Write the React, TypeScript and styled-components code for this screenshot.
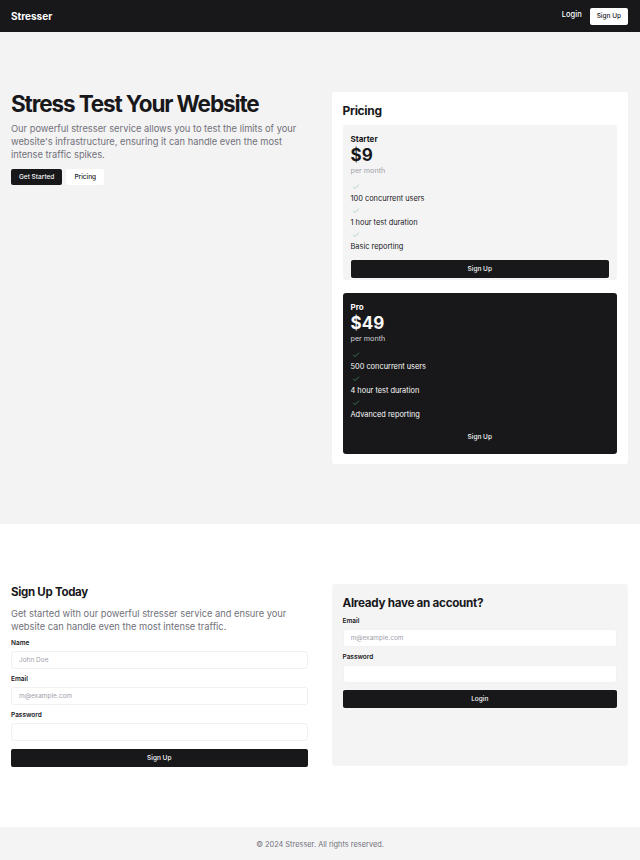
import styled, { createGlobalStyle } from 'styled-components';

const GlobalStyle = createGlobalStyle`
  html, body {
    margin: 0;
    padding: 0;
    background: #ffffff;
    font-family: Inter, 'Noto Sans', sans-serif;
    color: #18181b;
  }
  * {
    box-sizing: border-box;
  }
`;

const Header = styled.header`
  height: 32px;
  background: #18181b;
  display: flex;
  align-items: center;
  justify-content: space-between;
  padding: 0 12px 0 11px;
`;

const Brand = styled.div`
  color: #ffffff;
  font-size: 10px;
  font-weight: 700;
`;

const Nav = styled.nav`
  display: flex;
  align-items: center;
  gap: 8px;
`;

const NavLink = styled.a`
  color: #ffffff;
  font-size: 7.5px;
  font-weight: 500;
  margin-top: -4px;
`;

const Button = styled.button<{
  $variant?: 'dark' | 'light' | 'ghost';
  $block?: boolean;
  $h?: number;
  $mt?: number;
  $px?: number;
}>`
  border: none;
  font-family: inherit;
  font-size: 6.5px;
  font-weight: 500;
  border-radius: 2px;
  height: ${(p) => p.$h ?? 16}px;
  margin-top: ${(p) => p.$mt ?? 0}px;
  padding: 0 ${(p) => p.$px ?? 7}px;
  width: ${(p) => (p.$block ? '100%' : 'auto')};
  display: ${(p) => (p.$block ? 'flex' : 'inline-flex')};
  align-items: center;
  justify-content: center;
  background: ${(p) =>
    p.$variant === 'light' ? '#ffffff' : p.$variant === 'ghost' ? 'transparent' : '#18181b'};
  color: ${(p) => (p.$variant === 'light' ? '#18181b' : '#fafafa')};
`;

const Section = styled.section<{ $bg: string }>`
  background: ${(p) => p.$bg};
  padding: 60px 12px 60px 11px;
`;

const TwoCol = styled.div`
  display: grid;
  grid-template-columns: 1fr 1fr;
  gap: 24px;
  align-items: start;
`;

const HeroTitle = styled.h1`
  margin: 0;
  font-size: 22.5px;
  line-height: 24px;
  font-weight: 700;
  letter-spacing: -0.05em;
`;

const Lead = styled.p<{ $mt?: number }>`
  margin: ${(p) => p.$mt ?? 6}px 0 0;
  color: #71717a;
  font-size: 9.3px;
  line-height: 13px;
`;

const ButtonRow = styled.div`
  display: flex;
  gap: 4px;
  margin-top: 8px;
`;

const Card = styled.div<{ $bg: string; $minH?: number }>`
  background: ${(p) => p.$bg};
  border-radius: 3px;
  padding: 11px 11px 10px;
  min-height: ${(p) => p.$minH ?? 0}px;
`;

const CardTitle = styled.h2`
  margin: 0 0 6px;
  font-size: 12px;
  line-height: 16px;
  font-weight: 700;
  letter-spacing: -0.025em;
`;

const Plans = styled.div`
  display: flex;
  flex-direction: column;
  gap: 13px;
`;

const Plan = styled.div<{ $dark?: boolean }>`
  background: ${(p) => (p.$dark ? '#18181b' : '#f4f4f5')};
  color: ${(p) => (p.$dark ? '#fafafa' : '#18181b')};
  border-radius: 3px;
  padding: 9px 8px ${(p) => (p.$dark ? 8 : 2)}px;
`;

const PlanName = styled.div`
  font-size: 8px;
  line-height: 10px;
  font-weight: 700;
`;

const Price = styled.div`
  margin-top: 1px;
  font-size: 17px;
  line-height: 20px;
  font-weight: 700;
`;

const PerMonth = styled.div<{ $dark?: boolean }>`
  margin-top: 1px;
  font-size: 7.2px;
  line-height: 9px;
  color: ${(p) => (p.$dark ? '#d4d4d8' : '#a1a1aa')};
`;

const Features = styled.ul`
  list-style: none;
  margin: 8px 0 7px;
  padding: 0;
`;

const Feature = styled.li`
  font-size: 7.4px;
  line-height: 12px;
`;

const Check = styled.svg`
  display: block;
  width: 8px;
  height: 8px;
  margin: 2px 0 2px 1px;
`;

const FormTitle = styled.h2<{ $size?: number }>`
  margin: 0;
  font-size: ${(p) => p.$size ?? 11.5}px;
  line-height: 16px;
  font-weight: 700;
  letter-spacing: -0.025em;
`;

const Form = styled.form`
  display: flex;
  flex-direction: column;
`;

const Label = styled.label`
  font-size: 6.5px;
  font-weight: 600;
  line-height: 8px;
  margin-top: 6px;
  margin-bottom: 4px;
`;

const Input = styled.input`
  height: 18px;
  width: 100%;
  border: 1px solid #f1f1f3;
  border-radius: 3px;
  background: #ffffff;
  font-family: inherit;
  font-size: 6.5px;
  padding: 0 7px;
  outline: none;
  &::placeholder {
    color: #a1a1aa;
  }
`;

const Footer = styled.footer`
  height: 34px;
  background: #f4f4f5;
  display: flex;
  align-items: center;
  justify-content: center;
  font-size: 7.4px;
  color: #71717a;
`;

const CheckIcon = ({ dark }: { dark?: boolean }) => (
  <Check
    viewBox="0 0 24 24"
    fill="none"
    stroke={dark ? '#4f9a63' : '#8cc9a0'}
    strokeWidth="2"
    strokeLinecap="round"
    strokeLinejoin="round"
  >
    <path d="M20 6 9 17l-5-5" />
  </Check>
);

const plans = [
  {
    name: 'Starter',
    price: '$9',
    features: ['100 concurrent users', '1 hour test duration', 'Basic reporting'],
    dark: false,
  },
  {
    name: 'Pro',
    price: '$49',
    features: ['500 concurrent users', '4 hour test duration', 'Advanced reporting'],
    dark: true,
  },
];

export default function App() {
  return (
    <>
      <GlobalStyle />
      <Header>
        <Brand>Stresser</Brand>
        <Nav>
          <NavLink>Login</NavLink>
          <Button $variant="light" $h={17}>
            Sign Up
          </Button>
        </Nav>
      </Header>

      <Section $bg="#f3f3f3">
        <TwoCol>
          <div>
            <HeroTitle>Stress Test Your Website</HeroTitle>
            <Lead>
              Our powerful stresser service allows you to test the limits of your website's infrastructure,
              ensuring it can handle even the most intense traffic spikes.
            </Lead>
            <ButtonRow>
              <Button $px={8}>Get Started</Button>
              <Button $px={8} $variant="light">
                Pricing
              </Button>
            </ButtonRow>
          </div>
          <Card $bg="#ffffff">
            <CardTitle>Pricing</CardTitle>
            <Plans>
              {plans.map((plan) => (
                <Plan key={plan.name} $dark={plan.dark}>
                  <PlanName>{plan.name}</PlanName>
                  <Price>{plan.price}</Price>
                  <PerMonth $dark={plan.dark}>per month</PerMonth>
                  <Features>
                    {plan.features.map((f) => (
                      <Feature key={f}>
                        <CheckIcon dark={plan.dark} />
                        {f}
                      </Feature>
                    ))}
                  </Features>
                  <Button $block $h={18} $variant={plan.dark ? 'ghost' : 'dark'}>
                    Sign Up
                  </Button>
                </Plan>
              ))}
            </Plans>
          </Card>
        </TwoCol>
      </Section>

      <Section $bg="#ffffff">
        <TwoCol>
          <div>
            <FormTitle>Sign Up Today</FormTitle>
            <Lead $mt={7}>
              Get started with our powerful stresser service and ensure your website can handle even the most
              intense traffic.
            </Lead>
            <Form>
              <Label>Name</Label>
              <Input placeholder="John Doe" />
              <Label>Email</Label>
              <Input placeholder="m@example.com" />
              <Label>Password</Label>
              <Input type="password" />
              <Button $block $h={18} $mt={8}>
                Sign Up
              </Button>
            </Form>
          </div>
          <Card $bg="#f4f4f5" $minH={182}>
            <FormTitle $size={11.7}>Already have an account?</FormTitle>
            <Form>
              <Label>Email</Label>
              <Input placeholder="m@example.com" />
              <Label>Password</Label>
              <Input type="password" />
              <Button $block $h={18} $mt={7}>
                Login
              </Button>
            </Form>
          </Card>
        </TwoCol>
      </Section>

      <Footer>© 2024 Stresser. All rights reserved.</Footer>
    </>
  );
}
